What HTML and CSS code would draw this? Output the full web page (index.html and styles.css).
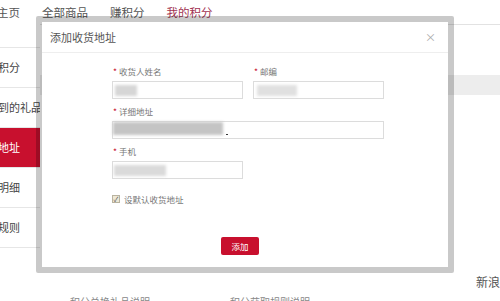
FILE: index.html
```html
<!DOCTYPE html>
<html lang="zh-CN">
<head>
    <meta charset="UTF-8">
    <meta name="viewport" content="width=device-width, initial-scale=1.0">
    <title>我的积分 - 收货地址</title>
    <link rel="stylesheet" href="styles.css">
</head>
<body>

    <div class="nav">
        <a href="#">主页</a>
        <a href="#">全部商品</a>
        <a href="#">赚积分</a>
        <a href="#" class="active">我的积分</a>
    </div>

    <div class="page">
        <ul class="sidebar">
            <li><a href="#">我的积分</a></li>
            <li><a href="#">我收到的礼品</a></li>
            <li class="current"><a href="#">收货地址</a></li>
            <li><a href="#">积分明细</a></li>
            <li><a href="#">积分规则</a></li>
        </ul>

        <div class="content">
            <div class="table-head"></div>
            <div class="share">新浪微博</div>
            <div class="footer">
                <span>积分兑换礼品说明</span>
                <span>积分获取规则说明</span>
            </div>
        </div>
    </div>

    <div class="modal">
        <div class="modal-header">
            <span class="modal-title">添加收货地址</span>
            <span class="close">×</span>
        </div>
        <form class="modal-body">
            <div class="row">
                <div class="field">
                    <label><em>*</em> 收货人姓名</label>
                    <div class="input"><span class="blur short"></span></div>
                </div>
                <div class="field">
                    <label><em>*</em> 邮编</label>
                    <div class="input"><span class="blur mid"></span></div>
                </div>
            </div>
            <div class="row">
                <div class="field wide">
                    <label><em>*</em> 详细地址</label>
                    <div class="input"><span class="blur long"></span><i class="caret"></i></div>
                </div>
            </div>
            <div class="row">
                <div class="field">
                    <label><em>*</em> 手机</label>
                    <div class="input"><span class="blur phone"></span></div>
                </div>
            </div>
            <div class="check">
                <span class="box">✓</span>
                设默认收货地址
            </div>
            <button type="button">添加</button>
        </form>
    </div>

</body>
</html>
```

FILE: styles.css
```css
body {
    font-family: "Noto Sans CJK SC", "Noto Sans", sans-serif;
    background-color: #fff;
    margin: 0;
    padding: 0;
    width: 500px;
    height: 301px;
    overflow: hidden;
    position: relative;
}

a {
    text-decoration: none;
}

.nav {
    height: 24px;
    display: flex;
    align-items: center;
    gap: 22px;
    margin-left: -3px;
    font-size: 11.5px;
}

.nav a {
    color: #555;
    line-height: 16px;
}

.nav a.active {
    color: #a23352;
}

.page {
    display: flex;
}

.sidebar {
    list-style: none;
    width: 40px;
    margin: 23px 0 0;
    padding: 0;
    border-top: 1px solid #e6e6e6;
}

.sidebar li {
    height: 39px;
    border-bottom: 1px solid #e6e6e6;
    overflow: hidden;
    white-space: nowrap;
}

.sidebar a {
    display: block;
    line-height: 39px;
    font-size: 11px;
    color: #444;
    text-indent: -24px;
}

.sidebar li.current {
    background-color: #c8102e;
}

.sidebar li.current a {
    color: #fff;
}

.content {
    flex: 1;
    border-top: 1px solid #e2e2e2;
}

.table-head {
    height: 20px;
    margin-top: 50px;
    background-color: #ededed;
}

.share {
    margin-top: 179px;
    padding-left: 436px;
    line-height: 16px;
    font-size: 12px;
    color: #555;
    white-space: nowrap;
}

.footer {
    display: flex;
    gap: 80px;
    margin-top: 5px;
    padding-left: 30px;
    font-size: 10px;
    line-height: 14px;
    color: #888;
}

/* popup */
.modal {
    position: absolute;
    left: 36px;
    top: 16px;
    width: 418px;
    height: 257px;
    box-sizing: border-box;
    border: 6px solid rgba(0, 0, 0, 0.21);
    border-radius: 2px;
    background-color: #fff;
    background-clip: padding-box;
}

.modal-header {
    height: 30px;
    display: flex;
    align-items: center;
    justify-content: space-between;
    padding: 0 12px 0 8px;
    border-bottom: 1px solid #eee;
}

.modal-title {
    font-size: 11px;
    color: #555;
}

.close {
    font-size: 11px;
    color: #aaa;
}

.modal-body {
    padding: 12px 0 0 70px;
}

.row {
    display: flex;
    gap: 10px;
    margin-bottom: 6px;
}

.field {
    width: 131px;
}

.field.wide {
    width: 272px;
}

.field label {
    display: block;
    font-size: 8.5px;
    line-height: 12px;
    color: #777;
    margin-bottom: 4px;
    padding-left: 1px;
}

.field label em {
    font-style: normal;
    color: #c8102e;
}

.input {
    height: 18px;
    box-sizing: border-box;
    border: 1px solid #dcdcdc;
    position: relative;
    display: flex;
    align-items: center;
}

.blur {
    display: block;
    height: 11px;
    background-color: #d6d6d6;
    filter: blur(1.5px);
}

.blur.short {
    width: 22px;
    margin-left: 2px;
}

.blur.mid {
    width: 40px;
    margin-left: 3px;
    background-color: #e0e0e0;
}

.blur.phone {
    width: 52px;
    margin-left: 1px;
    background-color: #dadada;
}

.blur.long {
    width: 110px;
    height: 13px;
    background-color: #c4c4c4;
    align-self: flex-start;
}

.caret {
    position: absolute;
    left: 113px;
    top: 12px;
    width: 2px;
    height: 1px;
    background-color: #333;
}

.check {
    display: flex;
    align-items: center;
    gap: 4px;
    margin-top: 14px;
    font-size: 8.5px;
    color: #777;
}

.box {
    width: 8px;
    height: 8px;
    box-sizing: border-box;
    border: 1px solid #b9b3a0;
    background-color: #eee8d5;
    font-size: 7px;
    line-height: 6px;
    text-align: center;
    color: #555;
}

button {
    display: block;
    margin: 32px 0 0 109px;
    width: 38px;
    height: 18px;
    padding: 0;
    background-color: #c8102e;
    color: white;
    border: none;
    border-radius: 2px;
    font-family: inherit;
    font-size: 8.5px;
    cursor: pointer;
}
```
